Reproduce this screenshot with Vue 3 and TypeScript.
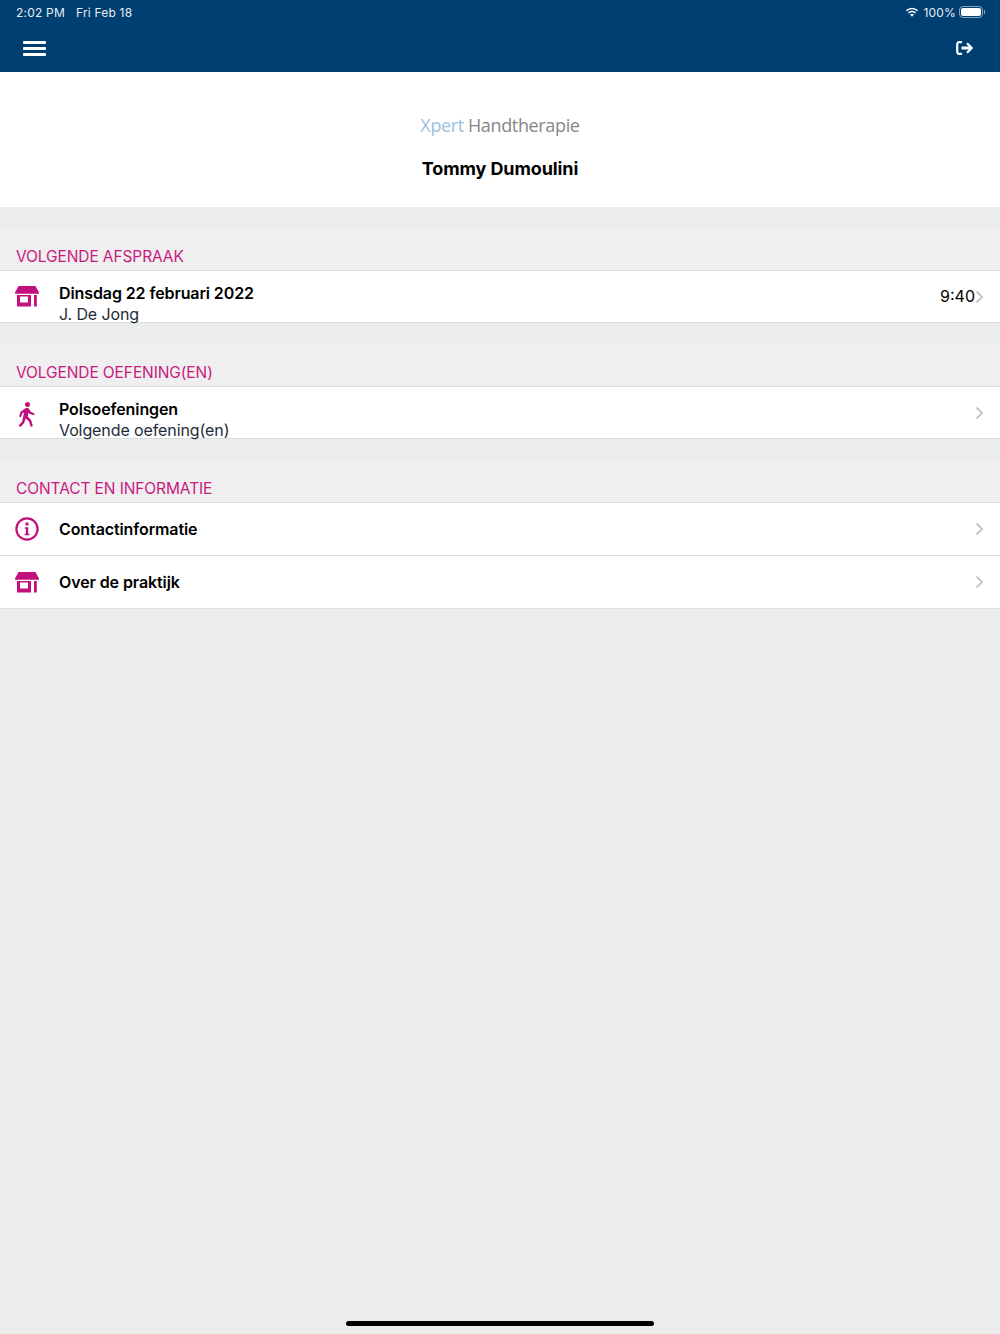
<script setup lang="ts">
interface Row { icon: string; title: string; sub?: string; time?: string }
interface Section { label: string; rows: Row[] }
const sections: Section[] = [
  { label: 'VOLGENDE AFSPRAAK', rows: [{ icon: 'store', title: 'Dinsdag 22 februari 2022', sub: 'J. De Jong', time: '9:40' }] },
  { label: 'VOLGENDE OEFENING(EN)', rows: [{ icon: 'walk', title: 'Polsoefeningen', sub: 'Volgende oefening(en)' }] },
  { label: 'CONTACT EN INFORMATIE', rows: [
    { icon: 'info', title: 'Contactinformatie' },
    { icon: 'store', title: 'Over de praktijk' }
  ] }
]
</script>

<template>
  <div class="page">
    <header class="top">
      <div class="status">
        <span class="clock">2:02 PM</span>
        <span class="date">Fri Feb 18</span>
        <span class="spacer"></span>
        <svg class="wifi" width="14" height="11" viewBox="0 0 14 11" fill="#fff">
          <path d="M7 2.2c2 0 3.8.8 5.2 2.1l1-1.1A9 9 0 0 0 7 .7 9 9 0 0 0 .8 3.2l1 1.1A7.5 7.5 0 0 1 7 2.2z"/>
          <path d="M7 5.2c1.2 0 2.3.5 3.1 1.2l1-1.1A6 6 0 0 0 7 3.7a6 6 0 0 0-4.1 1.6l1 1.1C4.700 5.700 5.800 5.200 7 5.200z"/>
          <path d="M7 6.700c-.8 0-1.500.3-2 .8L7 9.700l2-2.200c-.5-.5-1.200-.8-2-.8z"/>
        </svg>
        <span class="pct">100%</span>
        <span class="battery"><span class="fill"></span></span>
        <span class="nub"></span>
      </div>
      <div class="nav">
        <div class="burger"><i></i><i></i><i></i></div>
        <svg class="logout" width="18" height="14" viewBox="0 0 18 14" fill="none" stroke="#fff" stroke-width="2.200">
          <path d="M6 1.200H3.200A2 2 0 0 0 1.200 3.200v7.600a2 2 0 0 0 2 2H6"/>
          <path d="M5.500 7h9.500" stroke-width="3"/>
          <path d="M11 2.200L15.800 7 11 11.800" stroke-linejoin="round"/>
        </svg>
      </div>
    </header>

    <section class="hero">
      <div class="logo"><span class="xpert">Xpert</span><span class="hand">Handtherapie</span></div>
      <h1 class="name">Tommy Dumoulini</h1>
    </section>

    <section v-for="s in sections" :key="s.label" class="group">
      <h2 class="label">{{ s.label }}</h2>
      <div v-for="r in s.rows" :key="r.title" class="row" :class="{ single: !r.sub }">
        <span class="ico">
          <svg v-if="r.icon === 'store'" width="24" height="21" viewBox="0 0 24 21" fill="#c2117c">
            <path d="M3.500 0h17L24 6.500a1 1 0 0 1-.9 1.300H.9A1 1 0 0 1 0 6.500z"/>
            <path fill-rule="evenodd" d="M2 9h14v11.500H2zM5 10.500v6h8v-6z"/>
            <rect x="19" y="9" width="2.800" height="11.500"/>
          </svg>
          <svg v-else-if="r.icon === 'walk'" width="18" height="26" viewBox="0 0 18 26" fill="#c2117c">
            <circle cx="9.500" cy="2.600" r="2.500"/>
            <path d="M7.500 6.200c1.500-.6 3-.2 3.800 1l1.500 2.600 3.200 1.400c1.100.6.500 2.300-.7 1.900l-3.900-1.400-.8-1.300-.8 4 3.300 3.600 1.600 5.200c.4 1.500-1.900 2-2.400.6l-1.300-4.400-3.300-3-1.600 4.800-3.200 3.200c-1.100 1-2.700-.4-1.700-1.600l2.800-3 2.100-9.300-1.900.9-.9 3c-.4 1.300-2.400.8-2-.6l1.200-4z"/>
          </svg>
          <svg v-else width="24" height="24" viewBox="0 0 24 24" fill="none">
            <circle cx="12" cy="12" r="10.600" stroke="#c2117c" stroke-width="2.200"/>
            <circle cx="12" cy="7" r="1.700" fill="#c2117c"/>
            <path d="M9.800 10.300h3.400v6.500h1.200v1.500H9.700v-1.500h1.200v-5H9.800z" fill="#c2117c"/>
          </svg>
        </span>
        <div class="text">
          <div class="title">{{ r.title }}</div>
          <div v-if="r.sub" class="sub">{{ r.sub }}</div>
        </div>
        <span v-if="r.time" class="time">{{ r.time }}</span>
        <svg class="chev" width="9" height="14" viewBox="0 0 9 14" fill="none" stroke="#c4c6c8" stroke-width="2">
          <path d="M1.500 1.500L7 7l-5.500 5.500"/>
        </svg>
      </div>
    </section>

    <div class="home"></div>
  </div>
</template>

<style>
html, body { margin: 0; background: #ebeded; }
</style>

<style scoped>
.page {
  position: relative;
  width: 1000px;
  height: 1334px;
  overflow: hidden;
  background: #ebeded;
  font-family: Inter, "Liberation Sans", sans-serif;
  color: #000;
}
.top { height: 72px; background: #003f72; color: #fff; }
.status {
  height: 24px;
  padding: 0 15px 0 16px;
  display: flex;
  align-items: center;
  font-size: 12px;
  letter-spacing: 0.2px;
  color: #e6edf3;
}
.date { margin-left: 11px; }
.spacer { flex: 1; }
.pct { margin-left: 4px; }
.battery {
  margin-left: 3px;
  width: 24px;
  height: 12px;
  box-sizing: border-box;
  border: 1px solid #8aa4ba;
  border-radius: 4px;
  padding: 1px;
  display: flex;
}
.fill { flex: 1; background: #fff; border-radius: 2px; }
.nub { width: 1px; height: 4px; margin-left: 1px; background: #8aa4ba; }
.nav {
  height: 48px;
  padding: 0 26px 0 23px;
  display: flex;
  align-items: center;
  justify-content: space-between;
}
.burger { width: 23px; display: flex; flex-direction: column; gap: 3px; }
.burger i { display: block; height: 3px; background: #fff; border-radius: 1px; }
.hero { height: 135px; background: #fff; text-align: center; overflow: hidden; }
.logo {
  margin-top: 41px;
  height: 24px;
  font-family: "Open Sans", sans-serif;
  font-size: 18px;
  line-height: 24px;
  display: flex;
  justify-content: center;
  gap: 4px;
  letter-spacing: -0.35px;
}
.xpert { color: #9dbfe0; }
.hand { color: #85888b; }
.name {
  margin: 20px 0 0;
  font-size: 18px;
  line-height: 24px;
  font-weight: 700;
  letter-spacing: -0.1px;
}
.group { margin-top: 21px; background: #efefef; padding-top: 20px; }
.label {
  margin: 0;
  padding-left: 16px;
  height: 22px;
  font-size: 15.500px;
  line-height: 18px;
  font-weight: 400;
  color: #c9197f;
  letter-spacing: -0.1px;
}
.row {
  height: 52px;
  box-sizing: content-box;
  background: #fff;
  border-top: 1px solid #dcdddd;
  display: flex;
  align-items: flex-start;
  padding-right: 16px;
}
.group > .row:last-child { border-bottom: 1px solid #dcdddd; height: 51px; }
.row.single { height: 52px; align-items: center; }
.group > .row.single:last-child { height: 52px; }
.row + .row { border-top: 1px solid #dcdddd; }
.ico { width: 59px; flex: none; display: flex; justify-content: center; padding-right: 6px; box-sizing: border-box; padding-top: 15px; }
.row.single .ico { padding-top: 0; }
.text { flex: 1; padding-top: 11px; min-width: 0; overflow: hidden; }
.row.single .text { padding-top: 0; }
.title { font-size: 16px; line-height: 22px; font-weight: 600; letter-spacing: -0.1px; }
.sub { font-size: 16px; line-height: 21px; color: #1d2c38; letter-spacing: -0.1px; }
.time { font-size: 16px; line-height: 51px; }
.chev { flex: none; margin-left: 0; align-self: center; }
.home {
  position: absolute;
  left: 346px;
  top: 1321px;
  width: 308px;
  height: 5px;
  border-radius: 3px;
  background: #000;
}
</style>
